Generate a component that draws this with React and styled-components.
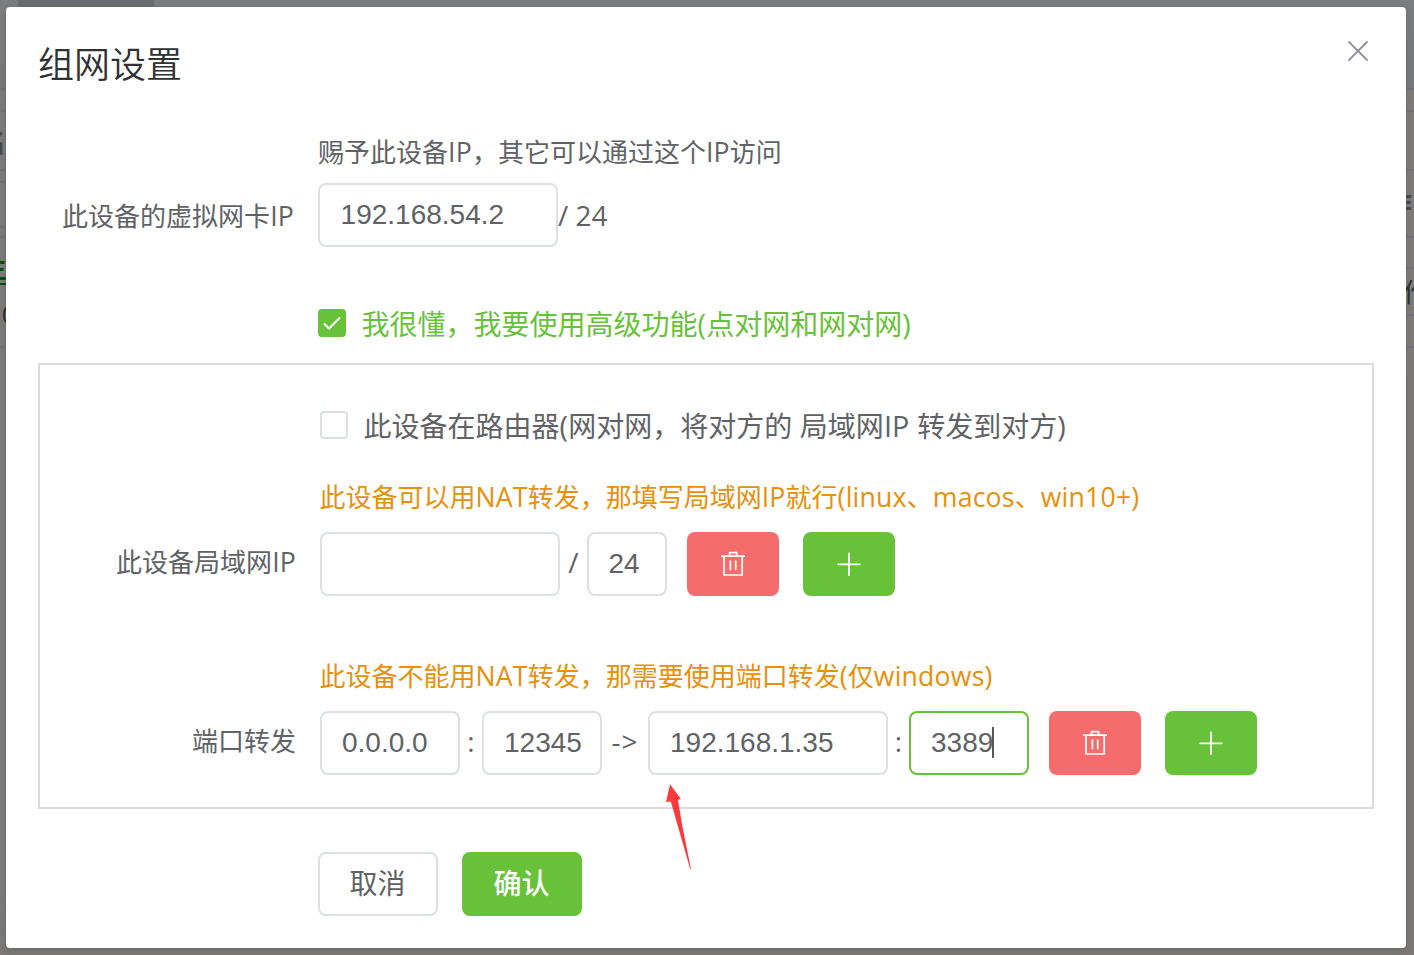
import React from 'react';
import styled, { createGlobalStyle } from 'styled-components';

const Global = createGlobalStyle`
  * { box-sizing: border-box; }
  html, body { margin: 0; height: 100%; overflow: hidden; }
  body {
    font-family: "Open Sans", "Noto Sans CJK SC", sans-serif;
    color: #606266;
    background: #787878;
  }
`;

const Backdrop = styled.div`
  position: relative;
  display: flex;
  width: 1414px;
  height: 955px;
  padding: 7px 8px 7px 6px;
  background: linear-gradient(#7b7c7d 0, #76787a 88px, #7c7b7a 90px, #7a7978 100%);
  overflow: hidden;
`;

const PageTab = styled.div`
  position: absolute;
  left: 18px;
  top: 0;
  width: 136px;
  height: 7px;
  background: #6a6c6f;
`;

const PageRule = styled.div`
  position: absolute;
  top: ${(p) => p.$y}px;
  left: ${(p) => (p.$right ? 1400 : 0)}px;
  width: 14px;
  height: 2px;
  background: #707277;
`;

const PageField = styled.div`
  position: absolute;
  left: -40px;
  top: 181px;
  width: 80px;
  height: 47px;
  border: 2px solid #6f7175;
  border-radius: 8px;
`;

const PageText = styled.span`
  position: absolute;
  left: ${(p) => p.$x}px;
  top: ${(p) => p.$y}px;
  font-size: 26px;
  line-height: 30px;
  font-weight: ${(p) => (p.$bold ? 700 : 400)};
  color: ${(p) => p.$color};
  text-decoration: ${(p) => (p.$underline ? 'underline 2px' : 'none')};
  text-underline-offset: 5px;
  white-space: nowrap;
`;

const Dialog = styled.section`
  position: relative;
  display: flex;
  flex-direction: column;
  width: 1400px;
  height: 941px;
  padding: 36px 32px 0;
  background: #fff;
  border-radius: 4px;
  box-shadow: 0 2px 6px rgba(0, 0, 0, 0.12);
`;

const Header = styled.header`
  display: flex;
  justify-content: space-between;
  height: 90px;
`;

const Title = styled.h1`
  margin: 0;
  font-size: 36px;
  line-height: 44px;
  font-weight: 350;
  color: #303133;
`;

const Close = styled.button`
  display: block;
  width: 32px;
  height: 20px;
  margin-top: -2px;
  padding: 0;
  border: 0;
  background: none;
  svg { display: block; }
`;

const Row = styled.div`
  display: flex;
  align-items: center;
  height: 64px;
  margin-top: ${(p) => p.$mt || 0}px;
`;

const Label = styled.label`
  align-self: flex-start;
  width: 280px;
  padding-right: 24px;
  text-align: right;
  font-size: 26px;
  line-height: ${(p) => p.$lh || 61}px;
  white-space: nowrap;
`;

const Hint = styled.div`
  margin: ${(p) => p.$mt || 0}px 0 0 ${(p) => (p.$warn ? 279.5 : 280)}px;
  height: ${(p) => (p.$warn ? 54 : 50)}px;
  font-size: 26px;
  line-height: 38px;
  white-space: nowrap;
  color: ${(p) => (p.$warn ? '#e6900b' : '#606266')};
`;

const Latin = styled.span`
  font-size: 1.025em;
  line-height: 1;
  letter-spacing: 0.2px;
`;

const Field = styled.div`
  position: relative;
  width: ${(p) => p.$w}px;
  height: 64px;
`;

const Input = styled.input`
  display: block;
  width: 100%;
  height: 64px;
  padding: 0 0 0 ${(p) => p.$pad || 20}px;
  border: 2px solid ${(p) => (p.$focus ? '#67c23a' : '#dcdfe6')};
  border-radius: 8px;
  outline: 0;
  background: #fff;
  font: 28px "Liberation Sans", sans-serif;
  color: #606266;
`;

const Caret = styled.i`
  position: absolute;
  left: 83px;
  top: 16px;
  width: 2px;
  height: 31px;
  background: #55575b;
`;

const Sep = styled.span`
  align-self: flex-start;
  width: ${(p) => (p.$w ? `${p.$w}px` : 'auto')};
  text-align: center;
  font-size: 28px;
  line-height: ${(p) => p.$lh || 61}px;
  letter-spacing: ${(p) => p.$ls || 0}px;
  white-space: nowrap;
`;

const Check = styled.label`
  display: flex;
  align-items: center;
  gap: 15.5px;
  height: 40px;
  margin: ${(p) => p.$mt || 0}px 0 0 280px;
  font-size: 28px;
  line-height: 40px;
  white-space: nowrap;
  color: ${(p) => (p.$on ? '#67c23a' : '#606266')};
`;

const Box = styled.span`
  display: block;
  width: 28px;
  height: 28px;
  margin-bottom: 3px;
  border: 2px solid ${(p) => (p.$on ? '#67c23a' : '#dcdfe6')};
  border-radius: 4px;
  background: ${(p) => (p.$on ? '#67c23a' : '#fff')};
  svg { display: block; }
`;

const Advanced = styled.div`
  width: 1336px;
  height: 446px;
  margin-top: 19px;
  padding-top: 41px;
  border: 2px solid #dcdcdc;
`;

const Button = styled.button`
  display: flex;
  align-items: center;
  justify-content: center;
  width: ${(p) => p.$w || 92}px;
  height: 64px;
  margin-left: ${(p) => p.$ml || 0}px;
  padding: 0 ${(p) => (p.$w ? 1 : 0)}px ${(p) => (p.$w ? 4 : 2)}px 0;
  border: ${(p) => (p.$kind ? '0' : '2px solid #dcdfe6')};
  border-radius: 8px;
  background: ${(p) => ({ danger: '#f56c6c', success: '#67c23a' }[p.$kind] || '#fff')};
  color: ${(p) => (p.$kind ? '#fff' : '#606266')};
  font: inherit;
  font-size: 28px;
  font-weight: ${(p) => (p.$kind ? 500 : 400)};
`;

const Arrow = styled.svg`
  position: absolute;
  left: 658px;
  top: 775px;
`;

const TrashIcon = () => (
  <svg width="28" height="28" viewBox="0 0 28 28" fill="none" stroke="#fff" strokeWidth="1.7" strokeLinecap="round" strokeLinejoin="round">
    <path d="M2.8 7.2H25.2M5 7.2V26H23.2V7.2M10.6 7V3.7H17.6V7M11.4 12V20.6M16.7 12V20.6" />
  </svg>
);

const PlusIcon = () => (
  <svg width="28" height="28" viewBox="0 0 28 28" fill="none" stroke="#fff" strokeWidth="1.8" strokeLinecap="round">
    <path d="M14 4.5V26M3.2 15.3H24.8" />
  </svg>
);

const RowButtons = () => (
  <>
    <Button $kind="danger" $ml={20}><TrashIcon /></Button>
    <Button $kind="success" $ml={24}><PlusIcon /></Button>
  </>
);

// Latin runs inside Chinese copy are set slightly wider.
const Mixed = ({ children }) => (
  <span>
    {children.split(/([\x20-\x7e]+)/).map((part, i) => (i % 2 ? <Latin key={i}>{part}</Latin> : part))}
  </span>
);

export default function App() {
  return (
    <>
      <Global />
      <Backdrop>
        <PageTab />
        {[89, 111, 170, 237, 347].map((y) => <PageRule key={y} $y={y - 1} />)}
        {[89, 111, 170, 237, 268, 315, 347].map((y) => <PageRule key={y} $right $y={y - 1} />)}
        <PageField />
        <PageText $x={-20} $y={127} $bold $color="#484a4d">名</PageText>
        <PageText $x={-19} $y={253} $bold $color="#045004" $underline>主</PageText>
        <PageText $x={-5} $y={299} $color="#303133">.0</PageText>
        <PageText $x={1386} $y={188} $bold $color="#484a4d">作</PageText>
        <PageText $x={1403} $y={277} $color="#303133">作</PageText>
        <Dialog>
          <Header>
            <Title>组网设置</Title>
            <Close aria-label="close">
              <svg width="32" height="20" viewBox="0 0 32 20" overflow="visible" fill="none" stroke="#909399" strokeWidth="1.8" strokeLinecap="round">
                <path d="M7 1L25 19M25 1L7 19" />
              </svg>
            </Close>
          </Header>
          <Hint><Mixed>赐予此设备IP，其它可以通过这个IP访问</Mixed></Hint>
          <Row>
            <Label $lh={66}><Mixed>此设备的虚拟网卡IP</Mixed></Label>
            <Field $w={240}><Input defaultValue="192.168.54.2" $pad={20.6} /></Field>
            <Sep $lh={65}>/ 24</Sep>
          </Row>
          <Check $on $mt={57}>
            <Box $on>
              <svg width="24" height="24" viewBox="0 0 24 24" fill="none" stroke="#fff" strokeWidth="2">
                <path d="M4 12.5L9 17.5L20 6.5" />
              </svg>
            </Box>
            <Mixed>我很懂，我要使用高级功能(点对网和网对网)</Mixed>
          </Check>
          <Advanced>
            <Check>
              <Box />
              <Mixed>此设备在路由器(网对网，将对方的 局域网IP 转发到对方)</Mixed>
            </Check>
            <Hint $warn $mt={32}><Mixed>此设备可以用NAT转发，那填写局域网IP就行(linux、macos、win10+)</Mixed></Hint>
            <Row>
              <Label><Mixed>此设备局域网IP</Mixed></Label>
              <Field $w={240}><Input /></Field>
              <Sep $w={27}>/</Sep>
              <Field $w={80}><Input defaultValue="24" $pad={19.4} /></Field>
              <RowButtons />
            </Row>
            <Hint $warn $mt={61}><Mixed>此设备不能用NAT转发，那需要使用端口转发(仅windows)</Mixed></Hint>
            <Row>
              <Label>端口转发</Label>
              <Field $w={140}><Input defaultValue="0.0.0.0" /></Field>
              <Sep $w={22}>:</Sep>
              <Field $w={120}><Input defaultValue="12345" /></Field>
              <Sep $w={46} $ls={1}>-&gt;</Sep>
              <Field $w={240}><Input defaultValue="192.168.1.35" /></Field>
              <Sep $w={21}>:</Sep>
              <Field $w={120}><Input defaultValue="3389" $focus /><Caret /></Field>
              <RowButtons />
            </Row>
          </Advanced>
          <Row $mt={43}>
            <Button $w={120} $ml={280}>取消</Button>
            <Button $w={120} $ml={24} $kind="success">确认</Button>
          </Row>
          <Arrow width="40" height="90" viewBox="0 0 40 90">
            <path d="M6 2.3L16.8 16.8L14 18L18.5 45L27 87L26.2 87L6.8 19.6L2 20Z" fill="#fb3b3b" />
          </Arrow>
        </Dialog>
      </Backdrop>
    </>
  );
}
